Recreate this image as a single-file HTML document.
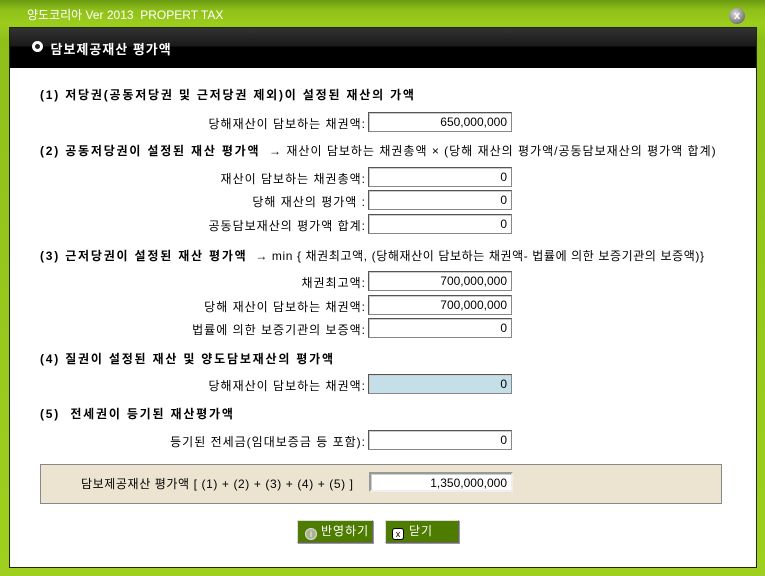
<!DOCTYPE html>
<html><head><meta charset="utf-8"><style>
*{margin:0;padding:0;box-sizing:border-box}
body{width:765px;height:576px;overflow:hidden;background:linear-gradient(#6a9a10 0,#8fc01a 10px,#9ccd1c 24px,#8fc01a 40px,#9fd01f 100%);font-family:"Liberation Sans","Noto Sans CJK KR",sans-serif;font-size:12px;color:#000;position:relative}
.t{position:absolute;white-space:nowrap;letter-spacing:1px}
#title{left:27px;top:6px;color:#fff;font-size:12px;letter-spacing:0}
#x{position:absolute;left:729px;top:8px;width:16px;height:16px;border-radius:50%;background:radial-gradient(circle at 40% 35%,#ddd,#777 70%,#555);color:#fff;font-size:11px;font-weight:bold;text-align:center;line-height:16px}
#panel{position:absolute;left:9px;top:27px;width:748px;height:541px;background:#fff;border:1px solid #1c2a08}
#head{position:absolute;left:0;top:0;width:746px;height:40px;background:linear-gradient(#333 0,#1a1a1a 18px,#000 19px,#000 100%)}
#head span{position:absolute;left:22px;top:11px;color:#fff;font-size:13px;font-weight:bold;letter-spacing:1px}
#head i{position:absolute;left:22px;top:13px;width:11px;height:11px;border-radius:50%;border:3px solid #fff;background:#222}
.h{font-weight:bold;font-size:12px;letter-spacing:1.8px}
.l{right:399px;text-align:right}
.in{position:absolute;left:368px;width:144px;height:20px;background:#fff;border:1px solid #888;border-top-color:#555;border-left-color:#555;box-shadow:inset 1px 1px 0 #ccc;text-align:right;padding-right:4px;line-height:18px;font-size:12px}
#sum{position:absolute;left:40px;top:464px;width:682px;height:40px;background:#ece4d0;border:1px solid #888}
.btn{position:absolute;top:520px;height:23px;background:#4e7c00;color:#fff;border:1px solid #ddd;border-right-color:#666;border-bottom-color:#666;box-shadow:1px 1px 0 #999;font-size:12px;line-height:21px;letter-spacing:1px}
</style></head><body>
<div class="t" id="title">양도코리아 Ver 2013 &nbsp;PROPERT TAX</div>
<div id="x">x</div>
<div id="panel"><div id="head"><i></i><span>&nbsp;&nbsp;&nbsp;&nbsp;담보제공재산 평가액</span></div></div>
<div class="t h" style="left:40px;top:86px">(1) 저당권(공동저당권 및 근저당권 제외)이 설정된 재산의 가액</div>
<div class="t l" style="top:115px">당해재산이 담보하는 채권액:</div><div class="in" style="top:112px">650,000,000</div>
<div class="t" style="left:40px;top:142px"><b style="letter-spacing:1.8px">(2) 공동저당권이 설정된 재산 평가액</b> &nbsp;→ 재산이 담보하는 채권총액 × (당해 재산의 평가액/공동담보재산의 평가액 합계)</div>
<div class="t l" style="top:170px">재산이 담보하는 채권총액:</div><div class="in" style="top:167px">0</div>
<div class="t l" style="top:193px">당해 재산의 평가액 :</div><div class="in" style="top:190px">0</div>
<div class="t l" style="top:217px">공동담보재산의 평가액 합계:</div><div class="in" style="top:214px">0</div>
<div class="t" style="left:40px;top:247px;letter-spacing:0.6px"><b style="letter-spacing:1.8px">(3) 근저당권이 설정된 재산 평가액</b> &nbsp;→ min { 채권최고액, (당해재산이 담보하는 채권액- 법률에 의한 보증기관의 보증액)}</div>
<div class="t l" style="top:274px">채권최고액:</div><div class="in" style="top:271px">700,000,000</div>
<div class="t l" style="top:298px">당해 재산이 담보하는 채권액:</div><div class="in" style="top:295px">700,000,000</div>
<div class="t l" style="top:321px">법률에 의한 보증기관의 보증액:</div><div class="in" style="top:318px">0</div>
<div class="t h" style="left:40px;top:350px">(4) 질권이 설정된 재산 및 양도담보재산의 평가액</div>
<div class="t l" style="top:377px">당해재산이 담보하는 채권액:</div><div class="in" style="top:374px;background:#c5dfe8">0</div>
<div class="t h" style="left:40px;top:405px">(5) &nbsp;전세권이 등기된 재산평가액</div>
<div class="t l" style="top:433px">등기된 전세금(임대보증금 등 포함):</div><div class="in" style="top:430px">0</div>
<div id="sum"></div>
<div class="t" style="left:81px;top:475px;letter-spacing:0.6px">담보제공재산 평가액 [ (1) + (2) + (3) + (4) + (5) ]</div>
<div class="in" style="left:369px;top:472px;border:2px solid #999;border-bottom-color:#eee;border-right-color:#eee">1,350,000,000</div>
<div class="btn" style="left:297px;width:76px"><span style="display:inline-block;width:12px;height:12px;border-radius:50%;background:#a9b48a;border:1px solid #dde;margin:0 4px 0 7px;vertical-align:-2px;font-size:9px;line-height:10px;text-align:center;letter-spacing:0">i</span>반영하기</div>
<div class="btn" style="left:385px;width:74px"><span style="display:inline-block;width:12px;height:12px;border-radius:3px;background:#fff;color:#000;border:1px solid #000;margin:0 5px 0 6px;vertical-align:-2px;font-size:9px;line-height:10px;text-align:center;letter-spacing:0">x</span>닫기</div>
</body></html>
